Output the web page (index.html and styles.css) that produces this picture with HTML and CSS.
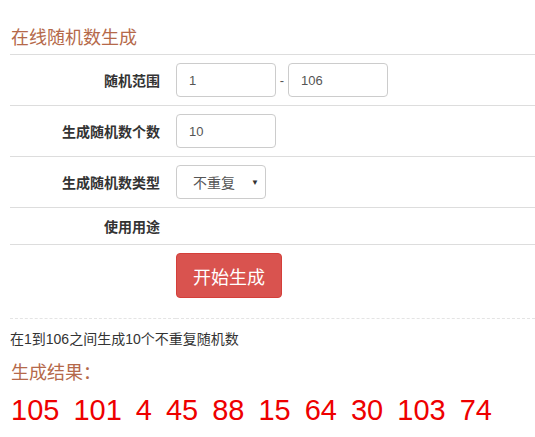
FILE: index.html
```html
<!DOCTYPE html>
<html lang="zh-CN">
<head>
<meta charset="UTF-8">
<title>在线随机数生成</title>
<link rel="stylesheet" href="styles.css">
</head>
<body>
<div class="wrap">
  <h2 class="title">在线随机数生成</h2>
  <table class="form-table">
    <tr>
      <th>随机范围</th>
      <td><input class="ipt" type="text" value="1"><span class="dash">-</span><input class="ipt" type="text" value="106"></td>
    </tr>
    <tr>
      <th>生成随机数个数</th>
      <td><input class="ipt" type="text" value="10"></td>
    </tr>
    <tr>
      <th>生成随机数类型</th>
      <td>
        <div class="select">不重复<span class="caret">&#9660;</span></div>
      </td>
    </tr>
    <tr class="short">
      <th>使用用途</th>
      <td></td>
    </tr>
    <tr class="btn-row">
      <th></th>
      <td><button class="btn">开始生成</button></td>
    </tr>
  </table>
  <p class="desc">在1到106之间生成10个不重复随机数</p>
  <h3 class="sub">生成结果：</h3>
  <div class="result">
    <span>105</span><span>101</span><span>4</span><span>45</span><span>88</span><span>15</span><span>64</span><span>30</span><span>103</span><span>74</span>
  </div>
</div>
</body>
</html>
```

FILE: styles.css
```css
body {
  margin: 0;
  font-family: "Liberation Sans", Arial, "Noto Sans CJK SC", sans-serif;
  font-size: 13px;
  color: #333;
  background: #fff;
}
.wrap {
  padding: 0 0 0 10px;
}
.title {
  margin: 0;
  padding: 23px 0 0 1px;
  height: 31px;
  font-size: 18px;
  font-weight: normal;
  color: #b5694a;
  border-bottom: 1px solid #ddd;
}
.form-table {
  width: 100%;
  border-collapse: collapse;
}
.form-table th,
.form-table td {
  border-bottom: 1px solid #ddd;
  padding: 0;
  height: 50px;
  vertical-align: middle;
}
.form-table th {
  width: 150px;
  text-align: right;
  font-size: 14px;
  font-weight: bold;
  color: #333;
  padding-right: 16px;
}
.form-table .short th,
.form-table .short td {
  height: 36px;
}
.form-table .btn-row th,
.form-table .btn-row td {
  border-bottom: 1px dashed #e4e4e4;
  height: 65px;
  vertical-align: top;
  padding-top: 8px;
}
.ipt {
  box-sizing: border-box;
  width: 100px;
  height: 34px;
  padding: 0 12px;
  border: 1px solid #ccc;
  border-radius: 4px;
  font-family: inherit;
  font-size: 13px;
  color: #555;
  vertical-align: middle;
}
.dash {
  display: inline-block;
  width: 12px;
  text-align: center;
  color: #555;
  vertical-align: middle;
}
.select {
  box-sizing: border-box;
  display: inline-flex;
  align-items: center;
  justify-content: space-between;
  width: 90px;
  height: 34px;
  padding: 0 6px 0 16px;
  border: 1px solid #ccc;
  border-radius: 4px;
  color: #555;
  font-size: 14px;
  vertical-align: middle;
}
.caret {
  font-size: 8px;
  color: #333;
}
.btn {
  box-sizing: border-box;
  width: 106px;
  height: 45px;
  background: #d9534f;
  border: 1px solid #d43f3a;
  border-radius: 4px;
  color: #fff;
  font-family: inherit;
  font-size: 18px;
  cursor: pointer;
}
.desc {
  margin: 9px 0 0 0;
  font-size: 14px;
  color: #333;
}
.sub {
  margin: 10px 0 0 1px;
  font-size: 18px;
  font-weight: normal;
  color: #b5694a;
}
.result {
  display: flex;
  gap: 14px;
  margin-top: 10px;
  padding-left: 1px;
  font-size: 29px;
  color: #e00;
}
```
